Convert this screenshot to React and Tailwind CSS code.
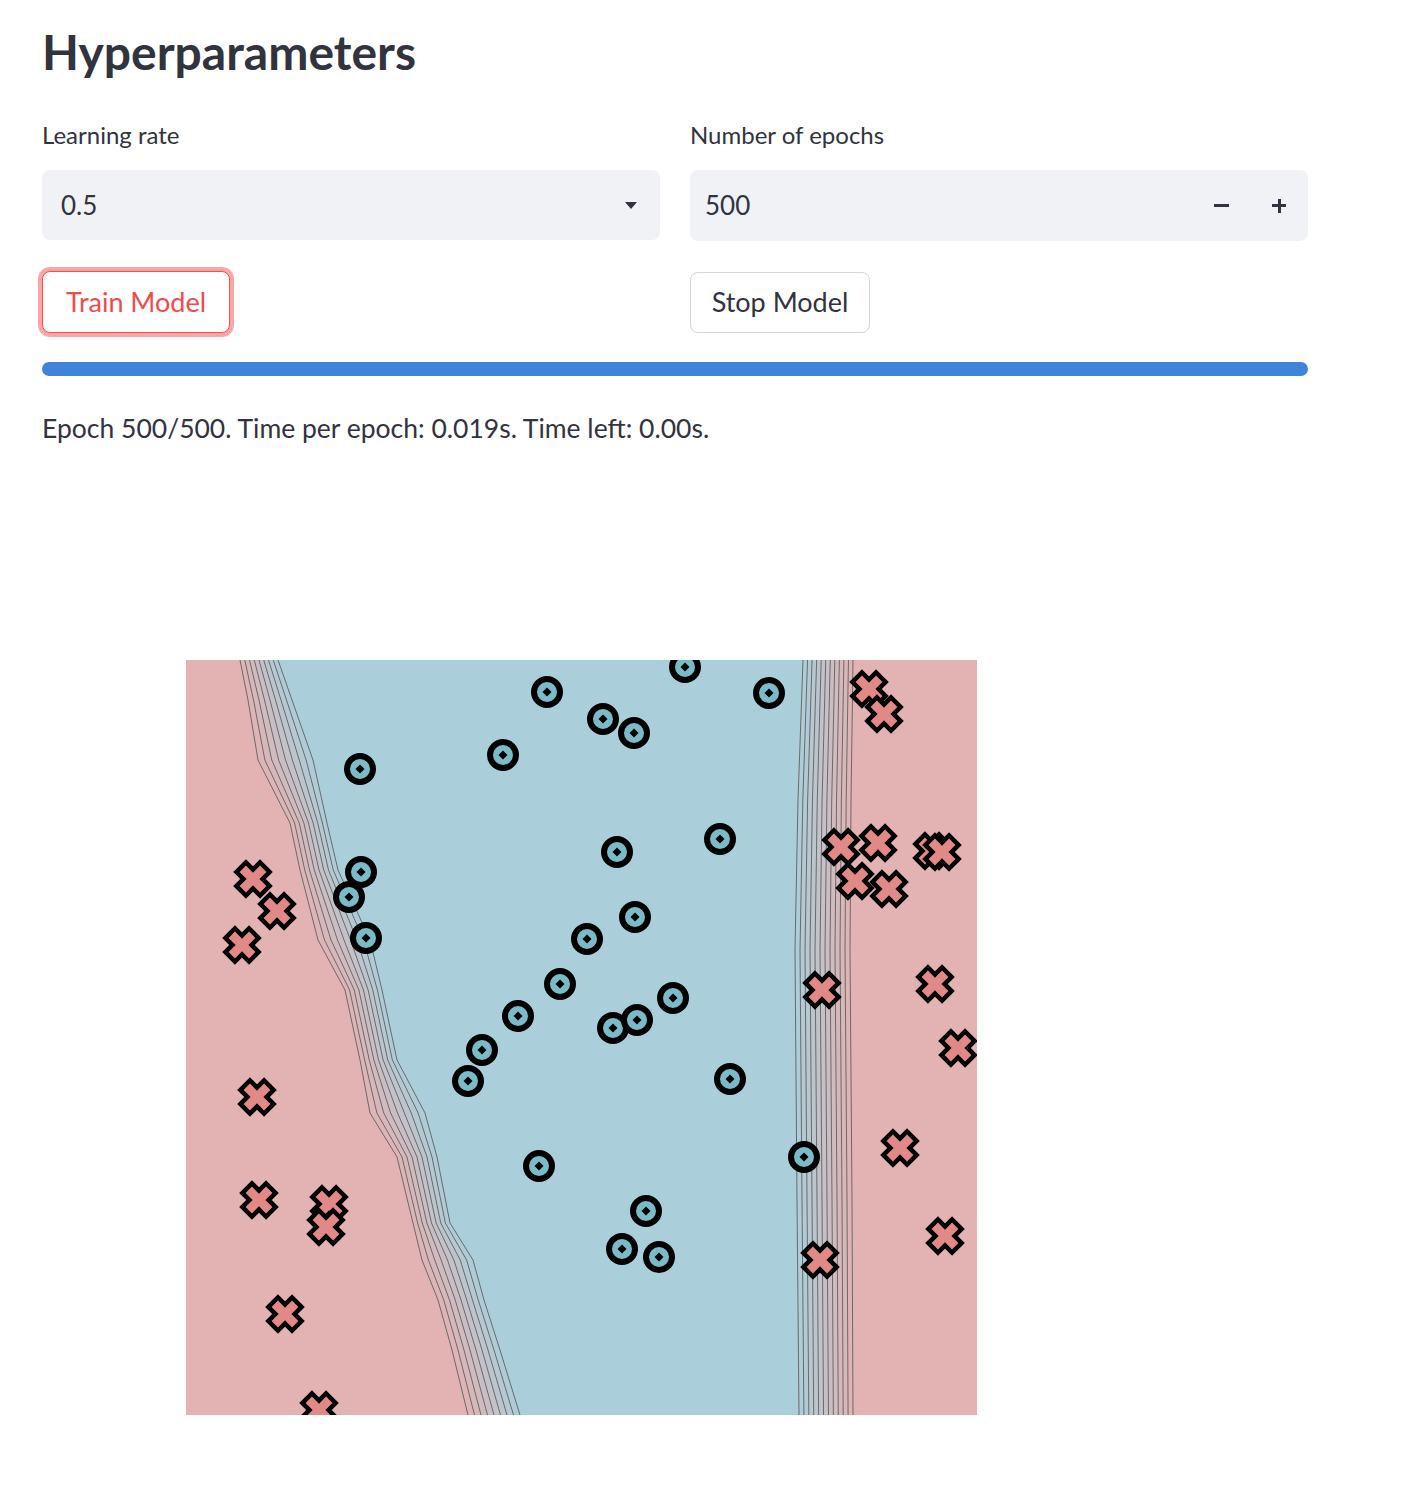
import React from 'react';

const PX = 186;
const PY = 660;
const W = 791;
const H = 755;

const PINK = [227, 178, 179];
const BLUE = [170, 206, 218];

// left decision boundary: [y, pink-side x, blue-side x]
const leftEdge = [
    [660, 240, 278], [700, 248, 292], [760, 258, 313], [823, 290, 327], [870, 300, 338],
    [940, 318, 370], [990, 345, 382], [1060, 360, 397], [1113, 370, 425], [1157, 397, 437],
    [1223, 413, 450], [1260, 422, 473], [1300, 438, 484], [1350, 452, 500], [1415, 468, 520],
];

// right decision boundary: [y, blue-side x, pink-side x]
const rightEdge = [
    [660, 803, 853], [800, 798, 851], [950, 795, 850], [1200, 797, 852], [1415, 799, 853],
];

const circles = [
    [685, 667], [547, 692], [769, 693], [603, 719], [634, 733], [503, 755], [360, 769],
    [720, 839], [617, 852], [361, 872], [349, 897], [366, 938], [635, 917], [587, 939],
    [560, 984], [673, 998], [518, 1016], [613, 1028], [637, 1020], [482, 1050], [468, 1081],
    [730, 1079], [804, 1157], [539, 1166], [646, 1211], [622, 1249], [659, 1257],
];

const crosses = [
    [869, 689], [884, 714], [253, 879], [277, 911], [242, 945], [841, 847], [878, 843],
    [932, 851], [942, 852], [855, 881], [889, 889], [822, 990], [935, 984], [958, 1048],
    [257, 1097], [900, 1148], [259, 1200], [329, 1204], [326, 1227], [945, 1236],
    [820, 1260], [285, 1314], [319, 1410],
];

const mix = (a, b, t) =>
    `rgb(${a.map((v, i) => Math.round(v + (b[i] - v) * t)).join(',')})`;

const linePoints = (edge, k, n) =>
    edge.map(([y, a, b]) => [a + ((b - a) * k) / n - PX, y - PY]);

const toStr = (pts) => pts.map(([x, y]) => `${x},${y}`).join(' ');

// matplotlib-style "X" marker
const crossPath = (() => {
    const w = 4.5;
    const L = 14.5;
    const pts = [
        [-w, -L], [w, -L], [w, -w], [L, -w], [L, w], [w, w],
        [w, L], [-w, L], [-w, w], [-L, w], [-L, -w], [-w, -w],
    ];
    const c = Math.SQRT1_2;
    return 'M' + pts.map(([x, y]) => `${((x - y) * c).toFixed(2)},${((x + y) * c).toFixed(2)}`).join('L') + 'Z';
})();

const Plot = () => {
    const nL = 8;
    const nR = 11;
    const bands = [];

    // left pink area
    const l0 = linePoints(leftEdge, 0, nL);
    bands.push(<polygon key="lp" points={toStr([[0, 0], ...l0, [0, H]])} fill={mix(PINK, PINK, 0)} />);
    for (let k = 0; k < nL; k++) {
        const a = linePoints(leftEdge, k, nL);
        const b = linePoints(leftEdge, k + 1, nL).reverse();
        bands.push(<polygon key={'lb' + k} points={toStr([...a, ...b])} fill={mix(PINK, BLUE, (k + 0.5) / nL)} />);
    }
    for (let k = 0; k < nR; k++) {
        const a = linePoints(rightEdge, k, nR);
        const b = linePoints(rightEdge, k + 1, nR).reverse();
        bands.push(<polygon key={'rb' + k} points={toStr([...a, ...b])} fill={mix(BLUE, PINK, (k + 0.5) / nR)} />);
    }
    const rl = linePoints(rightEdge, nR, nR);
    bands.push(<polygon key="rp" points={toStr([...rl, [W, H], [W, 0]])} fill={mix(PINK, PINK, 0)} />);

    const lines = [];
    for (let k = 0; k <= nL; k++) {
        lines.push(<polyline key={'ll' + k} points={toStr(linePoints(leftEdge, k, nL))} fill="none" stroke="#6a6a6a" strokeWidth="1" strokeLinejoin="round" />);
    }
    for (let k = 0; k <= nR; k++) {
        lines.push(<polyline key={'rl' + k} points={toStr(linePoints(rightEdge, k, nR))} fill="none" stroke="#6a6a6a" strokeWidth="1" />);
    }

    return (
        <svg width={W} height={H} viewBox={`0 0 ${W} ${H}`} className="block overflow-hidden">
            <rect width={W} height={H} fill={mix(BLUE, BLUE, 0)} />
            {bands}
            {lines}
            {circles.map(([x, y], i) => (
                <g key={'c' + i} transform={`translate(${x - PX},${y - PY})`}>
                    <circle r="13" fill="#7bbac7" stroke="#000" strokeWidth="6" />
                    <polygon points="0,-4.5 4.5,0 0,4.5 -4.5,0" fill="#000" />
                </g>
            ))}
            {crosses.map(([x, y], i) => (
                <path
                    key={'x' + i}
                    d={crossPath}
                    transform={`translate(${x - PX},${y - PY})`}
                    fill="#e08987"
                    stroke="#000"
                    strokeWidth="9"
                    strokeLinejoin="miter"
                    paintOrder="stroke"
                />
            ))}
        </svg>
    );
};

const App = () => {
    return (
        <div className="min-h-screen bg-white font-[Lato,sans-serif] text-[#31333f]">
            <div className="w-[1266px] ml-[42px] pt-[22px]">
                <h1 className="text-[48px] leading-[60px] font-bold">Hyperparameters</h1>

                <div className="grid grid-cols-2 gap-x-[30px] mt-[39px]">
                    <div>
                        <label className="block text-[24px] leading-[28px]">Learning rate</label>
                        <div className="mt-[21px] h-[70px] rounded-lg bg-[#f0f2f6] flex items-center justify-between pl-[19px] pr-[23px]">
                            <span className="text-[26px]">0.5</span>
                            <svg width="12" height="7" viewBox="0 0 12 7">
                                <polygon points="0,0 12,0 6,7" fill="#31333f" />
                            </svg>
                        </div>
                        <div className="mt-[31px]">
                            <button className="h-[62px] w-[188px] rounded-lg border border-[#ff4b4b] ring-4 ring-[#ff4b4b]/50 bg-white text-[27px] text-[#f04b4b]">
                                Train Model
                            </button>
                        </div>
                    </div>

                    <div>
                        <label className="block text-[24px] leading-[28px]">Number of epochs</label>
                        <div className="mt-[21px] h-[71px] rounded-lg bg-[#f0f2f6] flex items-center pl-[15px]">
                            <span className="text-[26px] flex-1">500</span>
                            <div className="flex items-center h-full">
                                <div className="w-[58px] h-full flex items-center justify-center">
                                    <div className="w-[15px] h-[3px] bg-[#31333f]" />
                                </div>
                                <div className="w-[58px] h-full flex items-center justify-center relative">
                                    <div className="w-[14px] h-[3px] bg-[#31333f]" />
                                    <div className="absolute w-[3px] h-[14px] bg-[#31333f]" />
                                </div>
                            </div>
                        </div>
                        <div className="mt-[31px]">
                            <button className="h-[61px] w-[180px] rounded-lg border border-[#d5d6da] bg-white text-[27px]">
                                Stop Model
                            </button>
                        </div>
                    </div>
                </div>

                <div className="mt-[29px] h-[14px] w-full rounded-full bg-[#3f83db]" />

                <p className="mt-[36px] text-[26.5px] leading-[32px]">
                    Epoch 500/500. Time per epoch: 0.019s. Time left: 0.00s.
                </p>

                <div className="mt-[216px] ml-[144px] pb-[89px]">
                    <Plot />
                </div>
            </div>
        </div>
    );
};

export default App;
